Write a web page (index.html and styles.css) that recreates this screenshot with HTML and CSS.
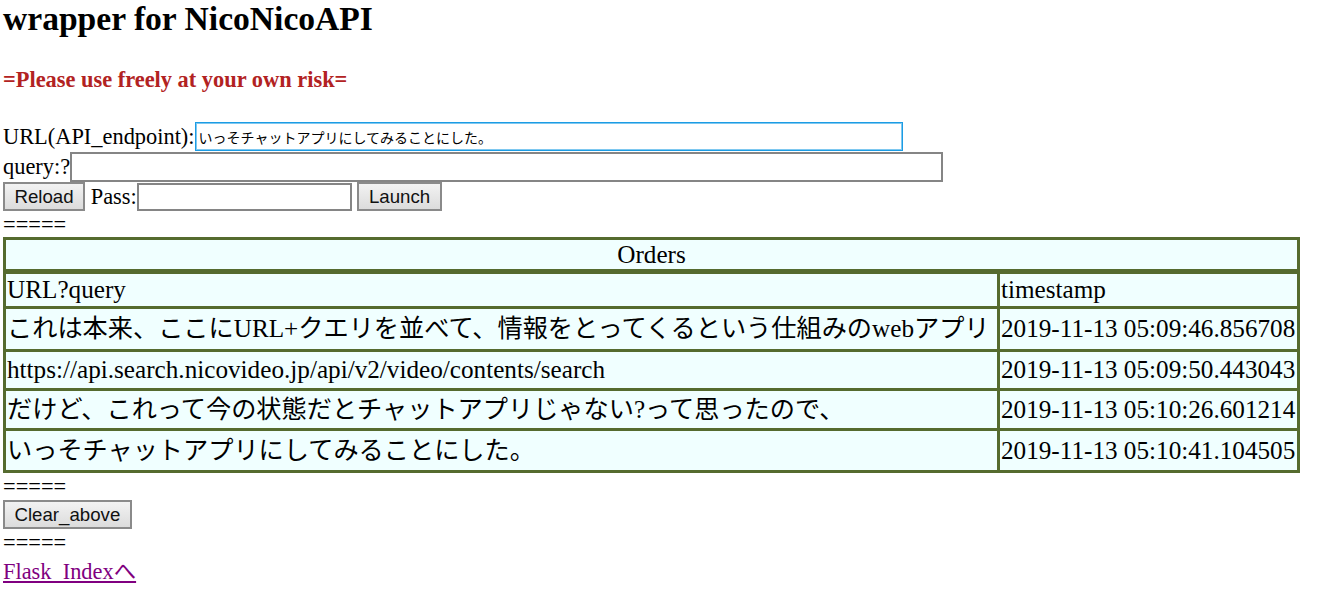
FILE: index.html
```html
<!DOCTYPE html>
<html lang="ja">
<head>
<meta charset="utf-8">
<title>wrapper for NicoNicoAPI</title>
<link rel="stylesheet" href="styles.css">
</head>
<body>
<h2 class="title">wrapper for NicoNicoAPI</h2>
<h4 class="warn">=Please use freely at your own risk=</h4>
<form class="form">
  <div class="row">URL(API_endpoint):<input class="field field-url" type="text" value="いっそチャットアプリにしてみることにした。"></div>
  <div class="row">query:?<input class="field field-query" type="text"></div>
  <div class="row"><button class="btn" type="button">Reload</button> Pass:<input class="field field-pass" type="password"> <button class="btn" type="button">Launch</button></div>
</form>
<div class="sep sep-top">=====</div>
<table class="orders">
  <colgroup><col class="col-url"><col class="col-ts"></colgroup>
  <tr class="r-title"><td colspan="2" class="cell cell-title">Orders</td></tr>
  <tr class="r-head"><td class="cell c1">URL?query</td><td class="cell c2">timestamp</td></tr>
  <tr class="r-data r-1"><td class="cell c1">これは本来、ここにURL+クエリを並べて、情報をとってくるという仕組みのwebアプリ</td><td class="cell c2">2019-11-13 05:09:46.856708</td></tr>
  <tr class="r-data r-2"><td class="cell c1">https://api.search.nicovideo.jp/api/v2/video/contents/search</td><td class="cell c2">2019-11-13 05:09:50.443043</td></tr>
  <tr class="r-data r-3"><td class="cell c1">だけど、これって今の状態だとチャットアプリじゃない?って思ったので、</td><td class="cell c2">2019-11-13 05:10:26.601214</td></tr>
  <tr class="r-data r-4"><td class="cell c1">いっそチャットアプリにしてみることにした。</td><td class="cell c2">2019-11-13 05:10:41.104505</td></tr>
</table>
<div class="sep sep-mid">=====</div>
<div class="clear-row"><button class="btn" type="button">Clear_above</button></div>
<div class="sep sep-bot">=====</div>
<div class="link-row"><a class="index-link" href="#">Flask_Indexへ</a></div>
</body>
</html>
```
FILE: styles.css
```css
body {
  margin: 0;
  padding: 0 0 0 3px;
  font-family: "Liberation Serif", "Noto Sans CJK JP", serif;
  font-size: 22.4px;
  color: #000;
  background: #fff;
}

.title {
  font-size: 33.6px;
  font-weight: bold;
  line-height: 38px;
  margin: 0;
}

.warn {
  font-size: 22.4px;
  font-weight: bold;
  line-height: 25px;
  color: #b22222;
  margin: 29px 0 0;
}

.form {
  margin: 30px 0 0;
}

.row {
  height: 30px;
  line-height: 30px;
  white-space: nowrap;
}

.field {
  box-sizing: border-box;
  height: 30px;
  margin: 0;
  padding: 0 3px;
  vertical-align: top;
  border: 2px solid #858585;
  background: #fff;
  font-family: "Noto Sans CJK JP", sans-serif;
  font-size: 14px;
  color: #000;
}

.field-url {
  width: 708px;
  height: 29px;
  border: 1px solid #1c9ce4;
  box-shadow: inset 0 0 0 1px #7ec8f0;
  outline: none;
}

.field-query {
  width: 873px;
}

.field-pass {
  width: 215px;
  height: 28px;
  margin-top: 1px;
}

.btn {
  box-sizing: border-box;
  height: 29px;
  margin: 0;
  padding: 0 9.5px;
  vertical-align: top;
  border: 2px solid #8a8a8a;
  background: linear-gradient(#f2f2f2, #dcdcdc);
  font-family: "Liberation Sans", Arial, sans-serif;
  font-size: 18.67px;
  line-height: 25px;
  color: #111;
}

.sep {
  line-height: 26px;
  height: 26px;
}

.sep-top {
  line-height: 25px;
  height: 25px;
}

.sep-mid {
  padding-top: 1px;
  height: 25px;
}

.orders {
  width: 1297px;
  table-layout: fixed;
  border: 3px solid #556b2f;
  border-spacing: 0;
  background: #f0ffff;
  font-size: 25.2px;
}

.col-ts {
  width: 297px;
}

.cell {
  padding: 1px;
  white-space: nowrap;
  overflow: hidden;
  vertical-align: middle;
  border-bottom: 3px solid #556b2f;
}

.c1 {
  border-right: 3px solid #556b2f;
}

.cell-title {
  text-align: center;
  padding: 0;
  line-height: 29px;
  border-bottom-width: 5px;
}

.r-head .cell {
  line-height: 30px;
}

.r-1 .cell {
  line-height: 38px;
}

.r-2 .cell {
  line-height: 34px;
}

.r-3 .cell {
  line-height: 35px;
}

.r-4 .cell {
  line-height: 37px;
}

.orders tr:last-child .cell {
  border-bottom: 0;
}

.clear-row {
  height: 30px;
  padding-top: 1px;
}

.link-row {
  line-height: 28px;
  padding-top: 2px;
}

.index-link {
  color: #800080;
  text-decoration: underline;
}
```
